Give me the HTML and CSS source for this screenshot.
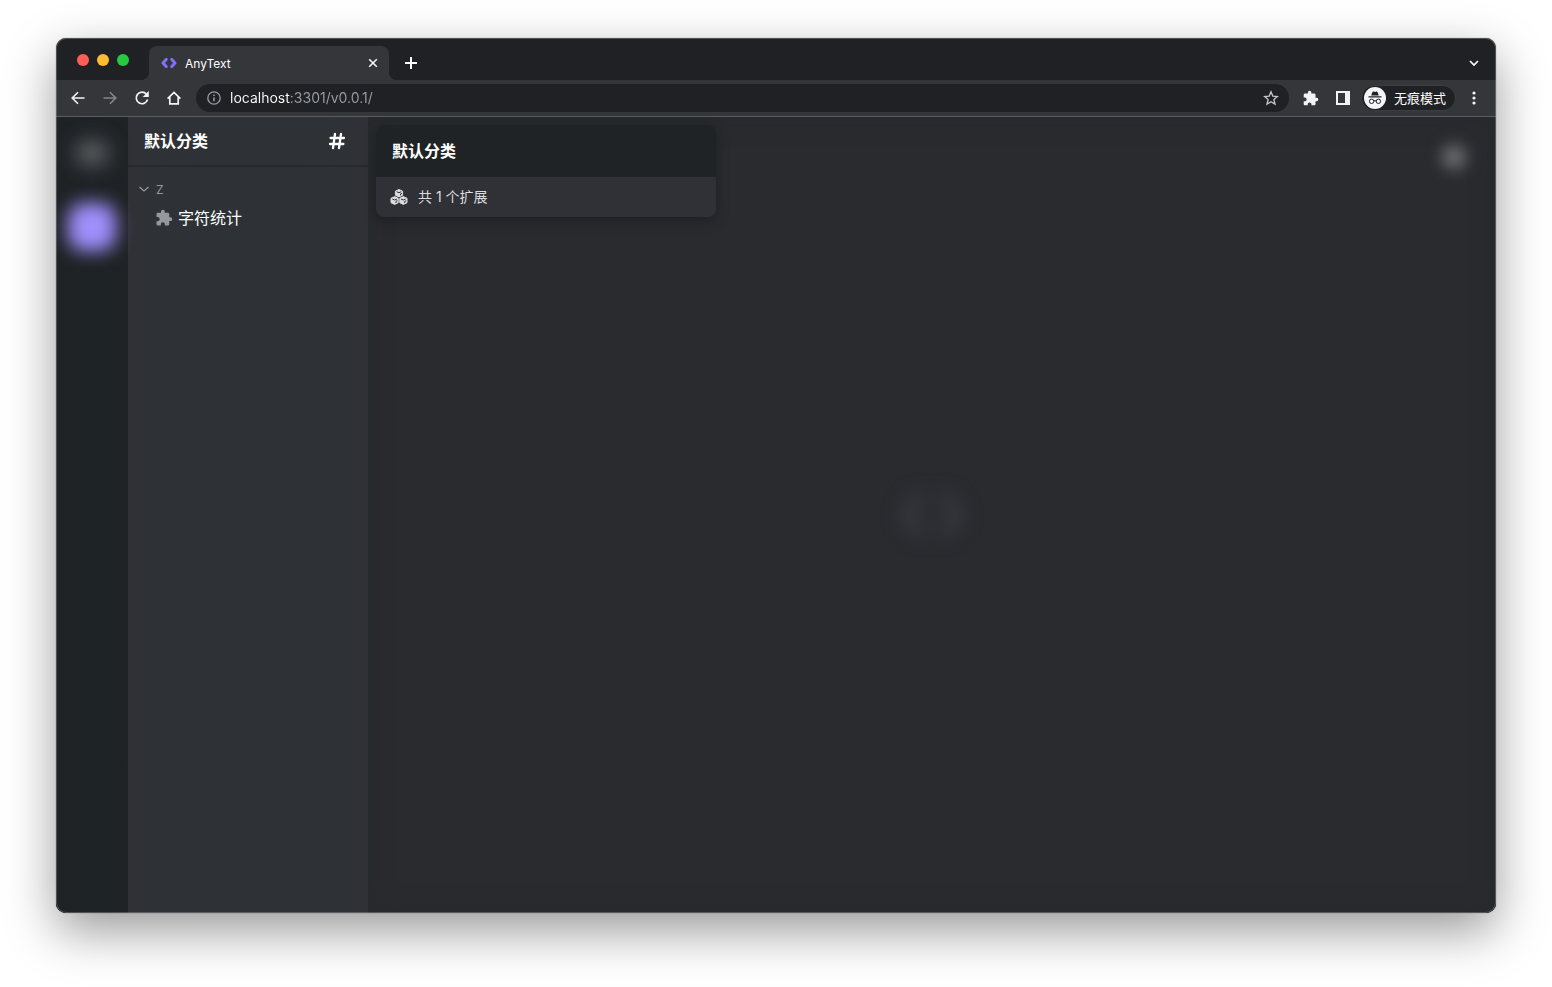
FILE: index.html
```html
<!DOCTYPE html>
<html lang="zh-CN">
<head>
<meta charset="utf-8">
<meta name="viewport" content="width=device-width, initial-scale=1">
<title>AnyText</title>
<link rel="stylesheet" href="styles.css">
</head>
<body>
<div class="window">
  <header class="tabstrip">
    <div class="lights">
      <button class="light light-close" aria-label="关闭"></button>
      <button class="light light-min" aria-label="最小化"></button>
      <button class="light light-max" aria-label="最大化"></button>
    </div>
    <div class="tab">
      <svg class="favicon" width="16" height="16" viewBox="0 0 16 16"><path d="M5.200 4.400 2 8l3.200 3.600M10.800 4.400 14 8l-3.200 3.600" fill="none" stroke="#7f70f5" stroke-width="3" stroke-linecap="round" stroke-linejoin="round"/></svg>
      <span class="tab-title">AnyText</span>
      <button class="tab-close" aria-label="关闭标签页"><svg width="16" height="16" viewBox="0 0 16 16"><path d="m4.200 4.200 7.600 7.600m0-7.600-7.600 7.600" stroke="#f1f3f4" stroke-width="1.600"/></svg></button>
    </div>
    <button class="tool new-tab" aria-label="新标签页"><svg width="16" height="16" viewBox="0 0 16 16"><path d="M8 2v12M2 8h12" stroke="#fff" stroke-width="2"/></svg></button>
    <button class="tool tab-search" aria-label="搜索标签页"><svg width="16" height="16" viewBox="0 0 16 16"><path d="m4 6 4 4 4-4" fill="none" stroke="#fff" stroke-width="1.700"/></svg></button>
  </header>

  <nav class="toolbar">
    <button class="tool" aria-label="后退"><svg width="16" height="16" viewBox="0 0 16 16"><path d="M14.500 8H2.400M8 2.200 2.200 8 8 13.800" fill="none" stroke="#f1f3f4" stroke-width="1.600"/></svg></button>
    <button class="tool" aria-label="前进"><svg width="16" height="16" viewBox="0 0 16 16"><path d="M1.500 8h12.100M8 2.200 13.800 8 8 13.800" fill="none" stroke="#85878a" stroke-width="1.600"/></svg></button>
    <button class="tool" aria-label="重新加载"><svg width="16" height="16" viewBox="0 0 16 16"><path d="M13.600 9.600A5.800 5.800 0 1 1 12.400 4.100l1.300 1.300" fill="none" stroke="#f1f3f4" stroke-width="1.700"/><path d="M14.800 1v6H8.700z" fill="#f1f3f4"/></svg></button>
    <button class="tool" aria-label="主页"><svg width="16" height="16" viewBox="0 0 16 16"><path d="M1.600 8.600 8 2.400l6.400 6.200M3.800 7v6.800h8.400V7" fill="none" stroke="#f1f3f4" stroke-width="1.700"/></svg></button>
    <label class="address">
      <svg width="16" height="16" viewBox="0 0 16 16"><circle cx="8" cy="8" r="6.200" fill="none" stroke="#9aa0a6" stroke-width="1.300"/><path d="M8 7.200v4M8 4.500V6" stroke="#9aa0a6" stroke-width="1.500"/></svg>
      <input class="url" type="text" aria-label="地址" value="localhost:3301/v0.0.1/" spellcheck="false">
      <button class="star" aria-label="收藏"><svg width="16" height="16" viewBox="0 0 16 16"><path d="m8 1.800 1.800 4.300 4.600.4-3.500 3 1.100 4.600L8 11.700l-4 2.400 1.100-4.600-3.500-3 4.600-.4z" fill="none" stroke="#c4c7ca" stroke-width="1.300"/></svg></button>
    </label>
    <button class="tool" aria-label="扩展程序"><svg width="16" height="16" viewBox="1 0 23 23"><path fill="#f1f3f4" d="M20.500 11H19V7c0-1.100-.9-2-2-2h-4V3.500a2.500 2.500 0 0 0-5 0V5H4c-1.100 0-1.990.9-1.990 2v3.800H3.500c1.490 0 2.700 1.210 2.700 2.700s-1.210 2.700-2.700 2.700H2V20c0 1.100.9 2 2 2h3.800v-1.500c0-1.490 1.210-2.700 2.700-2.700s2.700 1.210 2.700 2.700V22H17c1.100 0 2-.9 2-2v-4h1.500a2.500 2.500 0 0 0 0-5z"/></svg></button>
    <button class="tool" aria-label="侧边栏"><svg width="16" height="16" viewBox="0 0 16 16"><path fill="#f1f3f4" fill-rule="evenodd" d="M1 1h14v14H1zm2 2v10h7V3z"/></svg></button>
    <button class="incognito">
      <svg width="22" height="22" viewBox="0 0 22 22"><circle cx="11" cy="11" r="11" fill="#f5f6f7"/><path d="M7.200 8.600 8.500 5q.3-.8 1.100-.5l1.400.4 1.400-.4q.8-.3 1.100.5l1.300 3.600z" fill="#202124"/><path d="M4.500 9.900h13" stroke="#202124" stroke-width="1.100"/><g fill="none" stroke="#202124"><circle cx="7.600" cy="14.300" r="2.200"/><circle cx="14.400" cy="14.300" r="2.200"/><path d="M9.800 14q1.200-.7 2.400 0"/></g></svg>
      <span>无痕模式</span>
    </button>
    <button class="tool menu" aria-label="菜单"><svg width="16" height="16" viewBox="0 0 16 16" fill="#f1f3f4"><circle cx="8" cy="3" r="1.600"/><circle cx="8" cy="8" r="1.600"/><circle cx="8" cy="13" r="1.600"/></svg></button>
  </nav>

  <div class="app">
    <aside class="rail">
      <button class="orb orb-gray" aria-label="主页"></button>
      <button class="orb orb-violet" aria-label="默认分类"></button>
    </aside>
    <section class="sidebar">
      <div class="side-head">
        <h2 class="heading">默认分类</h2>
        <svg width="18" height="18" viewBox="0 0 18 18"><path d="M7 2 5 16M13 2l-2 14M2.600 6h13.400M2 12h13.400" fill="none" stroke="#fff" stroke-width="2.300" stroke-linecap="round"/></svg>
      </div>
      <div class="side-body">
        <button class="group"><svg width="12" height="12" viewBox="0 0 12 12"><path d="m1.500 4 4.500 4 4.500-4" fill="none" stroke="#96989d" stroke-width="1.300"/></svg><span>Z</span></button>
        <a class="item" href="#"><svg width="18" height="18" viewBox="0 0 24 24"><path fill="#96989d" d="M20.500 11H19V7c0-1.100-.9-2-2-2h-4V3.500a2.500 2.500 0 0 0-5 0V5H4c-1.100 0-1.990.9-1.990 2v3.800H3.500c1.490 0 2.700 1.210 2.700 2.700s-1.210 2.700-2.700 2.700H2V20c0 1.100.9 2 2 2h3.800v-1.500c0-1.490 1.210-2.700 2.700-2.700s2.700 1.210 2.700 2.700V22H17c1.100 0 2-.9 2-2v-4h1.500a2.500 2.500 0 0 0 0-5z"/></svg><span>字符统计</span></a>
      </div>
    </section>
    <main class="main">
      <article class="card">
        <h2 class="card-head heading">默认分类</h2>
        <p class="card-body">
          <svg width="18" height="18" viewBox="0 0 18 18"><g fill="#dcddde" stroke="#dcddde" stroke-linejoin="round"><path d="m9 1.500 3.600 1.700v4L9 8.900 5.400 7.200v-4z"/><path d="m4.700 8.600 3.500 1.700v4.400l-3.500 1.700-3.700-1.700v-4.400z"/><path d="m13.300 8.600 3.700 1.700v4.400l-3.700 1.700-3.500-1.700v-4.400z"/></g><g fill="none" stroke="#2f3136" stroke-width="1"><path d="M6.700 3.700 9 4.700l2.300-1M2.400 11l2.300 1L7 11M11 11l2.300 1 2.300-1"/><path d="M10.500 7.300V6l1.500-.7M6 15v-1.600l1.500-.7M14.700 15v-1.600l1.500-.7"/></g></svg>
          <span>共 1 个扩展</span>
        </p>
      </article>
      <button class="dot" aria-label="设置"></button>
      <div class="stage"><svg class="watermark" width="80" height="60" viewBox="0 0 80 60"><path d="M26 14 14 30l12 16M54 14l12 16-12 16" fill="none" stroke="#36373d" stroke-width="14" stroke-linecap="round" stroke-linejoin="round"/></svg></div>
    </main>
  </div>
</div>
</body>
</html>
```
FILE: styles.css
```css
* { box-sizing: border-box; }

body {
  margin: 0;
  height: 100vh;
  padding: 38px 56px 74px;
  display: flex;
  background: #fff;
  font-family: Inter, "Noto Sans CJK SC", sans-serif;
  color: #fff;
  overflow: hidden;
}

button {
  border: 0;
  padding: 0;
  background: none;
  color: inherit;
  font: inherit;
}

svg { display: block; flex: none; }
h2, p { margin: 0; }

.window {
  flex: 1;
  min-width: 0;
  position: relative;
  display: flex;
  flex-direction: column;
  border-radius: 10px;
  overflow: hidden;
  background: #202124;
  box-shadow: 0 0 1px rgba(0, 0, 0, .6), 0 18px 50px rgba(0, 0, 0, .4);
}
.window::after {
  content: "";
  position: absolute;
  inset: 0;
  border-radius: 10px;
  box-shadow: inset 0 0 0 1px rgba(255, 255, 255, .22);
  pointer-events: none;
}

.tabstrip {
  height: 42px;
  padding: 8px 6px 0 21px;
  display: flex;
  align-items: center;
}
.lights { display: flex; gap: 8px; margin: 0 20px 6px 0; }
.light { width: 12px; height: 12px; border-radius: 50%; }
.light-close { background: #ff5f57; }
.light-min { background: #febc2e; }
.light-max { background: #28c840; }

.tab {
  position: relative;
  width: 240px;
  height: 34px;
  padding: 0 8px 0 12px;
  display: flex;
  align-items: center;
  gap: 8px;
  border-radius: 8px 8px 0 0;
  background: #35363a;
  font-size: 12px;
}
.tab::before,
.tab::after {
  content: "";
  position: absolute;
  bottom: 0;
  width: 8px;
  height: 8px;
}
.tab::before { right: 100%; background: radial-gradient(circle at 0 0, transparent 8px, #35363a 8px); }
.tab::after { left: 100%; background: radial-gradient(circle at 100% 0, transparent 8px, #35363a 8px); }
.tab-title { flex: 1; }

.tool {
  flex: none;
  width: 32px;
  height: 32px;
  display: grid;
  place-items: center;
}
.new-tab { margin-left: 6px; }
.tab-search { margin-left: auto; }

.toolbar {
  height: 37px;
  padding: 0 6px;
  display: flex;
  align-items: center;
  background: #35363a;
  border-bottom: 1px solid #5b5c60;
}
.address {
  flex: 1;
  height: 28px;
  margin: 0 6px;
  padding: 0 10px;
  display: flex;
  align-items: center;
  gap: 8px;
  border-radius: 14px;
  background: #202124;
}
.url {
  flex: 1;
  min-width: 0;
  border: 0;
  padding: 0;
  outline: 0;
  font: 14px/20px Inter, sans-serif;
  background: linear-gradient(90deg, #fff 60px, #9aa0a6 60px);
  -webkit-background-clip: text;
  background-clip: text;
  color: transparent;
  caret-color: #fff;
}
.incognito {
  height: 26px;
  margin: 0 2px;
  padding: 0 9px 0 2px;
  display: flex;
  align-items: center;
  gap: 8px;
  border: 1px solid #3c3d41;
  border-radius: 13px;
  background: #202124;
  font-size: 13px;
  line-height: 18px;
}

.app {
  flex: 1;
  min-height: 0;
  display: flex;
  background: #2a2b2f;
}
.rail {
  width: 72px;
  padding-top: 16px;
  display: flex;
  flex-direction: column;
  align-items: center;
  background: linear-gradient(90deg, #202225, #1e2326 30%, #1e2326 70%, #202225);
}
.orb { border-radius: 50%; }
.orb-gray { width: 34px; height: 24px; margin-top: 8px; background: #646568; filter: blur(10px); }
.orb-violet { width: 48px; height: 48px; margin-top: 38px; border-radius: 16px; background: #a08ffd; filter: blur(9px); }

.sidebar {
  width: 240px;
  background: linear-gradient(90deg, #2f3136, #2e3236 30%, #2e3236 70%, #2f3136);
}
.side-head {
  height: 50px;
  padding: 0 22px 0 16px;
  display: flex;
  align-items: center;
  justify-content: space-between;
  border-bottom: 2px solid #27292d;
}
.heading { font-size: 16px; line-height: 24px; font-weight: 600; }
.side-body { padding: 13px 10px; }
.group {
  display: flex;
  align-items: center;
  gap: 6px;
  height: 18px;
  font-size: 12px;
  color: #96989d;
}
.item {
  display: flex;
  align-items: center;
  gap: 5px;
  height: 40px;
  padding-left: 17px;
  color: #fff;
  text-decoration: none;
  font-size: 16px;
  line-height: 24px;
}

.main {
  flex: 1;
  min-width: 0;
  position: relative;
  padding: 8px;
  box-shadow: inset 0 0 24px #25292c;
}
.card {
  width: 340px;
  border-radius: 8px;
  overflow: hidden;
  background: #2f3136;
  box-shadow: 0 4px 14px rgba(0, 0, 0, .28);
}
.card-head { padding: 14px 16px; background: #1f2326; }
.card-body {
  height: 40px;
  padding: 0 14px;
  display: flex;
  align-items: center;
  gap: 10px;
  font-size: 14px;
  line-height: 20px;
  color: #dcddde;
}
.dot {
  position: absolute;
  top: 28px;
  right: 30px;
  width: 24px;
  height: 24px;
  border-radius: 50%;
  background: #707174;
  filter: blur(8px);
}
.stage {
  position: absolute;
  inset: 0;
  display: grid;
  place-items: center;
  pointer-events: none;
}
.watermark { filter: blur(9px); }
```
